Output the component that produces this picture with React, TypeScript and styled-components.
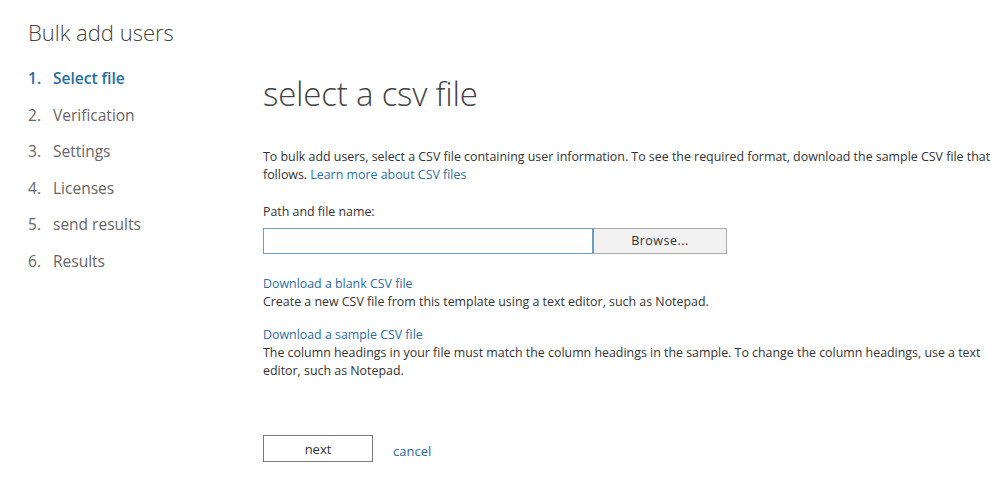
import * as React from 'react'
import styled, { createGlobalStyle } from 'styled-components'

const GlobalStyle = createGlobalStyle`
	html, body {
		margin: 0;
		padding: 0;
		background: #ffffff;
	}
	body {
		font-family: 'Open Sans', 'Noto Sans', Arial, sans-serif;
		color: #333333;
	}
`

const STEPS = ['Select file', 'Verification', 'Settings', 'Licenses', 'send results', 'Results']

const Page = styled.div`
	display: flex;
	width: 993px;
	height: 483px;
	box-sizing: border-box;
`

const Sidebar = styled.aside`
	width: 263px;
	flex-shrink: 0;
	box-sizing: border-box;
	padding: 16px 0 0 28px;
`

const Title = styled.h1`
	margin: 0;
	font-size: 22px;
	font-weight: 300;
	color: #444444;
	line-height: 32px;
`

const StepList = styled.ol`
	list-style: none;
	margin: 17px 0 0;
	padding: 0;
	display: flex;
	flex-direction: column;
	gap: 10.5px;
`

const Step = styled.li<{ $active?: boolean }>`
	display: flex;
	font-size: 15.5px;
	line-height: 26px;
	font-weight: ${(p) => (p.$active ? 600 : 400)};
	color: ${(p) => (p.$active ? '#1e6fa5' : '#666666')};
`

const StepNumber = styled.span`
	width: 25px;
`

const Main = styled.main`
	flex: 1;
	padding-top: 72px;
	font-size: 12.4px;
	line-height: 18px;
`

const Heading = styled.h2`
	margin: 0 0 32px;
	font-size: 33px;
	font-weight: 300;
	line-height: 44px;
	color: #444444;
	letter-spacing: -0.2px;
`

const Paragraph = styled.p`
	margin: 0;
	color: #333333;
`

const Link = styled.a`
	color: #2a6ea6;
	text-decoration: none;
	cursor: pointer;
`

const Label = styled.div`
	margin-top: 19px;
	color: #333333;
`

const FileRow = styled.div`
	display: flex;
	margin-top: 7px;
	height: 26px;
`

const PathInput = styled.input`
	width: 331px;
	height: 26px;
	box-sizing: border-box;
	border: 1px solid #6f9cc1;
	border-right-width: 2px;
	margin: 0;
	padding: 0 4px;
	font: inherit;
	outline: none;
`

const BrowseButton = styled.button`
	width: 133px;
	height: 26px;
	box-sizing: border-box;
	border: 1px solid #a9a9a9;
	border-left: none;
	background: #f2f2f2;
	font: inherit;
	font-size: 12.5px;
	color: #333333;
	letter-spacing: 0.5px;
	padding: 0;
`

const Download = styled.div`
	margin-top: 21px;

	& + & {
		margin-top: 15px;
	}
`

const Actions = styled.div`
	display: flex;
	align-items: center;
	gap: 20px;
	margin-top: 55px;
`

const NextButton = styled.button`
	width: 110px;
	height: 27px;
	box-sizing: border-box;
	border: 1px solid #7a7a7a;
	background: #ffffff;
	font: inherit;
	font-size: 13px;
	color: #333333;
	padding: 0;
`

const CancelLink = styled(Link)`
	font-size: 13px;
	margin-top: 4px;
`

export default function App() {
	return (
		<>
			<GlobalStyle />
			<Page>
				<Sidebar>
					<Title>Bulk add users</Title>
					<StepList>
						{STEPS.map((step, i) => (
							<Step key={step} $active={i === 0}>
								<StepNumber>{i + 1}.</StepNumber>
								{step}
							</Step>
						))}
					</StepList>
				</Sidebar>
				<Main>
					<Heading>select a csv file</Heading>
					<Paragraph>
						To bulk add users, select a CSV file containing user information. To see the required format, download the
						sample CSV file that follows. <Link>Learn more about CSV files</Link>
					</Paragraph>
					<Label>Path and file name:</Label>
					<FileRow>
						<PathInput type="text" />
						<BrowseButton>Browse...</BrowseButton>
					</FileRow>
					<Download>
						<Link>Download a blank CSV file</Link>
						<Paragraph>Create a new CSV file from this template using a text editor, such as Notepad.</Paragraph>
					</Download>
					<Download>
						<Link>Download a sample CSV file</Link>
						<Paragraph>
							The column headings in your file must match the column headings in the sample. To change the column
							headings, use a text editor, such as Notepad.
						</Paragraph>
					</Download>
					<Actions>
						<NextButton>next</NextButton>
						<CancelLink>cancel</CancelLink>
					</Actions>
				</Main>
			</Page>
		</>
	)
}
